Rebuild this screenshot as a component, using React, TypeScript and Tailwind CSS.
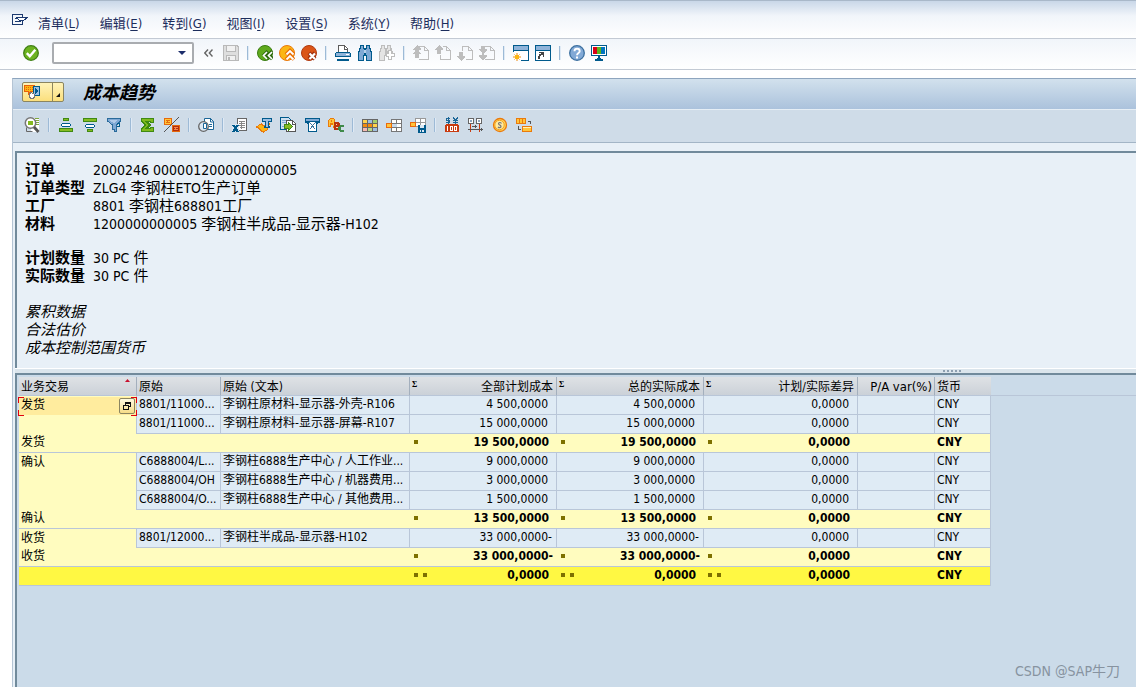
import { ReactNode } from "react";
import clsx from "clsx";

type IconProps = { children: ReactNode; smooth?: boolean };

function Icon({ children, smooth }: IconProps) {
  return (
    <svg
      className="block h-4 w-4 shrink-0"
      viewBox="0 0 16 16"
      fill="none"
      shapeRendering={smooth ? "auto" : "crispEdges"}
      aria-hidden="true"
    >
      {children}
    </svg>
  );
}

const pageShape = (
  <>
    <path d="M6 1.5h5.500l4 4v9H6" stroke="#bdbdbd" />
    <path d="M11.500 1v4H15" stroke="#bdbdbd" />
  </>
);

const systemTools = [
  {
    label: "保存",
    icon: (
      <Icon>
        <path d="M0 0h14l2 2v14H0z" fill="#b9b9b9" />
        <path d="M1 1h2v6h10V1h1l1 2v12h-2v-5H3v5H1z" fill="#dedede" />
        <path d="M4 1h8v5H4zM4 11h8v4H4z" fill="#f1f1f1" />
        <path d="M5 12h2v3H5z" fill="#b9b9b9" />
      </Icon>
    ),
  },
  null,
  {
    label: "返回",
    icon: (
      <Icon smooth>
        <circle cx="8" cy="8" r="7.5" fill="#5fa91c" stroke="#3a7d12" />
        <path d="M11 6.5 7.5 10l3.500 4M15.500 6.500 12 10l3.500 4" stroke="#2f6b0e" strokeWidth="4" />
        <path d="M10 7 6.500 10.500 10 14M15 7l-3.500 3.500L15 14" stroke="#fff" strokeWidth="1.700" />
      </Icon>
    ),
  },
  {
    label: "退出",
    icon: (
      <Icon smooth>
        <circle cx="8" cy="8" r="7.500" fill="#fbb614" stroke="#ea7a0c" />
        <path d="m7 9.500 4-4 4 4M7 14.500l4-4 4 4" stroke="#e8700a" strokeWidth="3.600" />
        <path d="m7.500 9.500 3.500-3.500 3.500 3.500M7.500 14.500 11 11l3.500 3.500" stroke="#fff" strokeWidth="1.800" />
      </Icon>
    ),
  },
  {
    label: "取消",
    icon: (
      <Icon smooth>
        <circle cx="8" cy="8" r="7.500" fill="#db5517" stroke="#b03a10" />
        <path d="m8 8 6 6m0-6-6 6" stroke="#9d2f0e" strokeWidth="4" />
        <path d="m8.500 8.500 5.500 5.500m0-5.500L8.500 14" stroke="#fff" strokeWidth="2.200" />
      </Icon>
    ),
  },
  null,
  {
    label: "打印",
    icon: (
      <Icon>
        <path d="M4 0h6l3 3v5H3z" fill="#fff" />
        <path d="M3.500 7V.5h6l3 3V7M9.500 1v3H12" stroke="#5c5c5c" />
        <path d="M1 7h14v1h1v4H0V8h1z" fill="#005a8c" />
        <path d="M1 8h14v3H1z" fill="#8fb3d9" />
        <path d="M11 9h3v1h-3z" fill="#fff" />
        <path d="M2 14h12v2H2z" fill="#005a8c" />
      </Icon>
    ),
  },
  {
    label: "查找",
    icon: (
      <Icon>
        <path d="M3 0h4v3h2V0h4v3h1v3h1v10H9v-5H7v5H1V6h1V3h1z" fill="#005a8c" />
        <path d="M4 1h2v3h1v6H6v5H2V7h1V4h1zM10 1h2v3h1v3h1v8h-4v-5H9V4h1z" fill="#7fa8d4" />
        <path d="M7 5h2v3H7z" fill="#b8d0ea" />
      </Icon>
    ),
  },
  {
    label: "继续查找",
    icon: (
      <Icon>
        <path d="M2 0h4v3h2V0h4v3h1v3h1v4H8v1H6v5H0V6h1V3h1z" fill="#bdbdbd" />
        <path d="M3 1h2v3h1v6H5v5H1V7h1V4h1zM9 1h2v5H8V4h1z" fill="#e4e4e4" />
        <path d="M9 5h4v3h3v4h-3v3H9v-3H7V8h2z" fill="#bdbdbd" />
        <path d="M10 6h2v3h3v2h-3v3h-2v-3H8V9h2z" fill="#fff" />
      </Icon>
    ),
  },
  null,
  {
    label: "首页",
    icon: (
      <Icon>
        {pageShape}
        <path d="M4 0 0 4v1h2v2l-2 1v1h2v4h4V9h2V8L6 7V5h2V4z" fill="#bdbdbd" />
      </Icon>
    ),
  },
  {
    label: "上一页",
    icon: (
      <Icon>
        <path d="M5.500 10v4.500h10v-9l-4-4H8" stroke="#bdbdbd" />
        <path d="M11.500 1v4H15" stroke="#bdbdbd" />
        <path d="M4 0 0 4v1h2v4h4V5h2V4z" fill="#bdbdbd" />
      </Icon>
    ),
  },
  {
    label: "下一页",
    icon: (
      <Icon>
        <path d="M5.500 6V1.500h6l4 4v9H9" stroke="#bdbdbd" />
        <path d="M11.500 1v4H15" stroke="#bdbdbd" />
        <path d="M2 7h4v4h2v1l-4 4-4-4v-1h2z" fill="#bdbdbd" />
      </Icon>
    ),
  },
  {
    label: "末页",
    icon: (
      <Icon>
        {pageShape}
        <path d="M2 1h4v3h2v1L5 8v2h3v1l-4 5-4-5v-1h3V8L0 5V4h2z" fill="#bdbdbd" />
      </Icon>
    ),
  },
  null,
  {
    label: "新会话",
    icon: (
      <Icon>
        <path d="M1 1h14v14H1z" fill="#fff" />
        <path d="M1 1h14v4H1z" fill="#8fb3d9" />
        <path d="M.5 7V.5h15v15H8M1 5.500h14" stroke="#005a8c" />
        <path d="M4 8v8M0 12h8M1.500 9.500l5 5m0-5-5 5" stroke="#ef8a0c" shapeRendering="auto" />
        <path d="M2 10h4v4H2z" fill="#fbb614" />
      </Icon>
    ),
  },
  {
    label: "快捷方式",
    icon: (
      <Icon>
        <path d="M.5.5h15v15H.5z" fill="#fff" stroke="#005a8c" />
        <path d="M1 1h14v4H1z" fill="#8fb3d9" />
        <path d="M1 5.500h14" stroke="#005a8c" />
        <path d="M4 7h5v5H8v-2H6v1H5v3H3v-3h1V9h2V8H4z" fill="#444" />
      </Icon>
    ),
  },
  null,
  {
    label: "帮助",
    icon: (
      <Icon smooth>
        <circle cx="8" cy="8" r="7.300" fill="#82a9d6" stroke="#3b6f9f" strokeWidth="1.300" />
        <path d="M5.500 6.200c0-3.200 5.200-3.200 5.200 0C10.700 8 8 8 8 10.200" stroke="#fff" strokeWidth="1.900" />
        <path d="M7 11.500h2v2H7z" fill="#fff" />
      </Icon>
    ),
  },
  {
    label: "定制布局",
    icon: (
      <Icon>
        <path d="M.5.5h15v10H.5z" fill="#fff" stroke="#005a8c" />
        <path d="M2 2h4v7H2z" fill="#d90016" />
        <path d="M6 2h4v7H6z" fill="#5fb41c" />
        <path d="M10 2h4v7h-4z" fill="#0075c0" />
        <path d="M7 11h2v3H7zM6 13h4v1h2v2H4v-2h2z" fill="#005a8c" />
      </Icon>
    ),
  },
];

const reportTools = [
  {
    label: "明细",
    icon: (
      <Icon smooth>
        <path d="M7 1h8v14H7z" fill="#fff" />
        <path d="M11 1.500h4M11 3.500h4M11 5.500h4M11 7.500h4" stroke="#7da83a" />
        <path d="M2.500 10.500v4h6" stroke="#666" />
        <circle cx="6.500" cy="6" r="5.200" fill="#fff" stroke="#777" strokeWidth="1.500" />
        <path d="M4 4h5v4H4z" fill="#83b81f" />
        <path d="m10 10 4.500 5" stroke="#555" strokeWidth="2.800" />
      </Icon>
    ),
  },
  null,
  {
    label: "升序",
    icon: (
      <Icon>
        <path d="M5 1h6v3H5zM1 11h14v4H1z" fill="#3f8a12" />
        <path d="M6 2h4v1H6zM2 12h12v2H2z" fill="#86bb22" />
        <path d="M4 7h8v2H4z" fill="#fff" />
        <path d="M4 6h8v1H4zM4 9h8v1H4zM3 7h1v2H3zM12 7h1v2h-1z" fill="#005a8c" />
      </Icon>
    ),
  },
  {
    label: "降序",
    icon: (
      <Icon>
        <path d="M1 1h14v4H1zM5 12h6v3H5z" fill="#3f8a12" />
        <path d="M2 2h12v2H2zM6 13h4v1H6z" fill="#86bb22" />
        <path d="M4 8h8v2H4z" fill="#fff" />
        <path d="M4 7h8v1H4zM4 10h8v1H4zM3 8h1v2H3zM12 8h1v2h-1z" fill="#005a8c" />
      </Icon>
    ),
  },
  {
    label: "过滤",
    icon: (
      <Icon>
        <path d="M1.500 1.500h13V4L10.500 8v6.500h-2v-2h-2V8l-5-4z" fill="#7fa8d4" stroke="#2a6b9b" />
        <path d="M3 3h9l-4 3z" fill="#b0cae8" />
        <path d="M11 6.500h2v3h-2" stroke="#005a8c" />
      </Icon>
    ),
  },
  null,
  {
    label: "总计",
    icon: (
      <Icon>
        <path d="M1 1h13v5h-4V5H8l3 3-3 3h2v-1h4v5H1v-4l3-3-3-3z" fill="#3f8a12" />
        <path d="M2 2h11v3h-2V4H5v1l4 3-4 3v1h6v-1h2v3H2v-2l4-4-4-4z" fill="#7fba1c" />
      </Icon>
    ),
  },
  {
    label: "小计",
    icon: (
      <Icon>
        <path d="M0 1h8v7H0zM8 8h8v7H8z" fill="#e5690c" />
        <path d="M1 2h6v5H1z" fill="#ffc53a" />
        <path d="M2 3h4v1H4v1h2v1H2V5h1V4H2z" fill="#e5690c" />
        <path d="M9 9h6v5H9z" fill="#b32d0c" />
        <path d="M10 10h4v1h-2v1h2v1h-4v-1h1v-1h-1z" fill="#f3884c" />
        <path d="M0 15 15 0" stroke="#555" shapeRendering="auto" />
      </Icon>
    ),
  },
  null,
  {
    label: "打印预览",
    icon: (
      <Icon smooth>
        <path d="M6.500 1.500h6l3 3v8h-9z" fill="#fff" stroke="#1c6798" />
        <path d="M12.500 1v4H16M11 7.500h3M11 9.500h3" stroke="#1c6798" />
        <circle cx="5.500" cy="9.500" r="4.800" fill="#dce8f3" stroke="#666" strokeWidth="1.300" />
        <path d="M5.500 6.500h3v5h-3z" fill="#fff" stroke="#1c6798" />
      </Icon>
    ),
  },
  null,
  {
    label: "电子表格",
    icon: (
      <Icon>
        <path d="M5.500 1.500h9v12h-9z" fill="#fff" stroke="#666" />
        <path d="M7 4.500h6M7 6.500h6M7 8.500h6M8 10.500h5" stroke="#888" />
        <path d="M9.500 4v8" stroke="#888" />
        <path d="M0 7h7v8H0z" fill="#dbe6f1" />
        <path d="M0 8h3v1h1V8h3v1H6v1H5v2h1v2h1v1H4v-1H3v1H0v-1h1v-2h1v-2H1V9H0z" fill="#005a8c" />
      </Icon>
    ),
  },
  {
    label: "字处理",
    icon: (
      <Icon>
        <path d="m.5 10 5-3.500 1 2 4 1 3-2.500-2 5.500-4 2.500-3-1.500-1-2z" fill="#fbb614" stroke="#ea7a0c" />
        <path d="M6 1h10v4h-3v4h1v2H8V9h1V5H6z" fill="#005a8c" />
        <path d="M7 2h8v2h-3v6h-2V4H7z" fill="#9dc0e4" />
      </Icon>
    ),
  },
  {
    label: "本地文件",
    icon: (
      <Icon>
        <path d="M.5.5h8l2 2v10H.5z" fill="#cfe0f0" stroke="#005a8c" />
        <path d="M2 3.500h4M2 5.500h4M2 9.500h3" stroke="#7fa8d4" />
        <path d="M6.500 3.500h6l3 3v8h-9z" fill="#fff" stroke="#555" />
        <path d="M12.500 3v4H16" stroke="#555" />
        <path d="M4 7h4V5h1l4 4.500L9 14H8v-2H4z" fill="#3f8a12" />
        <path d="M5 8h4V7l3 2.500L9 12v-1H5z" fill="#86bb22" />
      </Icon>
    ),
  },
  {
    label: "邮件收件人",
    icon: (
      <Icon>
        <path d="M1 1h15v5h-2v1H3V6H1z" fill="#005a8c" />
        <path d="M2 2h13v2H2z" fill="#7fa8d4" />
        <path d="M4.500 4.500h8v10h-8z" fill="#fff" stroke="#005a8c" />
        <path d="m5.500 5.500 3 3 3-3M6 12l2.500-3M11 12 8.500 9" stroke="#39759f" />
      </Icon>
    ),
  },
  {
    label: "ABC 分析",
    icon: (
      <Icon>
        <path d="M0 10V3l2-2h3l2 2v8H5V8H3v2z" fill="#ea7a0c" />
        <path d="M1 9V3l1-1h3l1 1v6H5V6H2v3z" fill="#ffc53a" />
        <path d="M3 3h1v2H3z" fill="#ea7a0c" />
        <path d="M6 5h4l2 2v5l-1 1H6z" fill="#b8320e" />
        <path d="M8 7h1v1H8zM8 10h2v1H8z" fill="#ffd4bd" />
        <path d="M16 8h-4l-2 2v3l2 2h4v-2h-3v-3h3z" fill="#3f8a4a" />
      </Icon>
    ),
  },
  null,
  {
    label: "当前显示",
    icon: (
      <Icon>
        <path d="M0 2h16v13H0z" fill="#666" />
        <path d="M1 3h4v3H1z" fill="#ffd34d" />
        <path d="M6 3h4v3H6z" fill="#a0bfe0" />
        <path d="M11 3h4v3h-4z" fill="#a5cf6b" />
        <path d="M1 7h4v3H1zM6 7h4v3H6z" fill="#f08a10" />
        <path d="M11 7h4v3h-4z" fill="#ffd34d" />
        <path d="M1 11h4v3H1z" fill="#f6b9b0" />
        <path d="M6 11h4v3H6z" fill="#b6d78a" />
        <path d="M11 11h4v3h-4z" fill="#a0bfe0" />
      </Icon>
    ),
  },
  {
    label: "选择布局",
    icon: (
      <Icon>
        <path d="M5 2h11v13H5z" fill="#fff" />
        <path d="M5 2.500h11M5 6.500h11M5 10.500h11M5 14.500h11M5.500 2v4M5.500 11v4M10.500 2v13M15.500 2v13" stroke="#777" />
        <path d="M6 7h5v3H6z" fill="#c6d9ec" />
        <path d="M.5 6.500h5v4h-5z" fill="#ffc53a" stroke="#ea6a0c" />
      </Icon>
    ),
  },
  {
    label: "保存布局",
    icon: (
      <Icon>
        <path d="M5 1h11v8H5z" fill="#fff" />
        <path d="M5 1.500h11M5 5.500h11M5.500 1v4M10.500 1v8M15.500 1v8M5 9.500h4" stroke="#999" />
        <path d="M.5 5.500h5v4h-5z" fill="#ffc53a" stroke="#ea6a0c" />
        <path d="M8 8h8v8H8z" fill="#005a8c" />
        <path d="M10 8h4v3h-4zM10 13h4v2h-4z" fill="#dce8f3" />
        <path d="M11 13h1v2h-1z" fill="#005a8c" />
      </Icon>
    ),
  },
  null,
  {
    label: "货币",
    icon: (
      <Icon>
        <path d="M6 1.500H2.500v2h3v2H2M4.500 0v7" stroke="#1c6798" />
        <path d="m9 .5 2.500 2.500L14 .5M11.500 3v4M9 3.500h5M9 5.500h5" stroke="#1c6798" />
        <path d="M2 7h12v1h1v7H1V8h1z" fill="#c93c10" />
        <path d="M3 9h1v5H3zM6 9h3v5H6zM10 9h3v5h-3z" fill="#fff" />
        <path d="M7 10h1v3H7zM11 10h1v3h-1z" fill="#c93c10" />
      </Icon>
    ),
  },
  {
    label: "期间比较",
    icon: (
      <Icon>
        <path d="M.5 1.500h5v5h-5zM8.500 1.500h5v5h-5z" fill="#fff" stroke="#666" />
        <path d="M2 3h2v2H2zM10 3h2v2h-2z" fill="#8fa5bd" />
        <path d="M2.500 7v8M11.500 7v8" stroke="#c93c10" />
        <path d="M4 9.500h5M7.500 8v3M0 12.500h15M13.500 11v3" stroke="#555" />
      </Icon>
    ),
  },
  {
    label: "成本",
    icon: (
      <Icon smooth>
        <circle cx="8" cy="8" r="6.500" fill="#ffd65a" stroke="#ea7a0c" strokeWidth="1.300" />
        <circle cx="7.500" cy="8" r="4.700" fill="#ffeaa0" stroke="#f3a21c" />
        <path d="M9.500 6.500C8 4.500 5.500 6 7 7.500l1.500 1C10 10 7.500 11.500 6 10" stroke="#777" strokeWidth="1.200" />
      </Icon>
    ),
  },
  {
    label: "汇总",
    icon: (
      <Icon>
        <path d="M.5 1.500h9v5h-9z" fill="#ffc53a" stroke="#ea7a0c" />
        <path d="M3.500 2v5M6.500 2v5" stroke="#ea7a0c" />
        <path d="M6.500 9.500h9v5h-9z" fill="#ffc53a" stroke="#ea7a0c" />
        <path d="M7 10h8v1H7z" fill="#fff2b8" />
        <path d="M12 4.500h2.500V7M2.500 9v3.500H5" stroke="#555" />
      </Icon>
    ),
  },
];

const menus = [
  { title: "清单", key: "L" },
  { title: "编辑", key: "E" },
  { title: "转到", key: "G" },
  { title: "视图", key: "I" },
  { title: "设置", key: "S" },
  { title: "系统", key: "Y" },
  { title: "帮助", key: "H" },
];

const orderInfo = [
  { label: "订单", value: "2000246 000001200000000005" },
  { label: "订单类型", value: "ZLG4 李钢柱ETO生产订单" },
  { label: "工厂", value: "8801 李钢柱688801工厂" },
  { label: "材料", value: "1200000000005 李钢柱半成品-显示器-H102" },
];

const quantities = [
  { label: "计划数量", value: "30 PC 件" },
  { label: "实际数量", value: "30 PC 件" },
];

type Row = {
  kind: "item" | "subtotal" | "total";
  group?: string;
  origin?: string;
  text?: string;
  plan: string;
  actual: string;
  variance: string;
};

const rows: Row[] = [
  { kind: "item", group: "发货", origin: "8801/11000...", text: "李钢柱原材料-显示器-外壳-R106", plan: "4 500,0000", actual: "4 500,0000", variance: "0,0000" },
  { kind: "item", origin: "8801/11000...", text: "李钢柱原材料-显示器-屏幕-R107", plan: "15 000,0000", actual: "15 000,0000", variance: "0,0000" },
  { kind: "subtotal", group: "发货", plan: "19 500,0000", actual: "19 500,0000", variance: "0,0000" },
  { kind: "item", group: "确认", origin: "C6888004/L...", text: "李钢柱6888生产中心 / 人工作业...", plan: "9 000,0000", actual: "9 000,0000", variance: "0,0000" },
  { kind: "item", origin: "C6888004/OH", text: "李钢柱6888生产中心 / 机器费用...", plan: "3 000,0000", actual: "3 000,0000", variance: "0,0000" },
  { kind: "item", origin: "C6888004/O...", text: "李钢柱6888生产中心 / 其他费用...", plan: "1 500,0000", actual: "1 500,0000", variance: "0,0000" },
  { kind: "subtotal", group: "确认", plan: "13 500,0000", actual: "13 500,0000", variance: "0,0000" },
  { kind: "item", group: "收货", origin: "8801/12000...", text: "李钢柱半成品-显示器-H102", plan: "33 000,0000-", actual: "33 000,0000-", variance: "0,0000" },
  { kind: "subtotal", group: "收货", plan: "33 000,0000-", actual: "33 000,0000-", variance: "0,0000" },
  { kind: "total", plan: "0,0000", actual: "0,0000", variance: "0,0000" },
];

function Toolbar({ tools, className }: { tools: typeof systemTools; className: string }) {
  return (
    <div className={clsx("flex items-center", className)}>
      {tools.map((tool, i) =>
        tool ? (
          <button key={tool.label} type="button" aria-label={tool.label}>
            {tool.icon}
          </button>
        ) : (
          <span key={i} className="h-3.5 w-0.5 border-l border-r border-l-[#9dbad6] border-r-[#dfeaf5]" />
        )
      )}
    </div>
  );
}

function MenuBar() {
  return (
    <nav className="flex h-[39px] items-center border-t border-b border-t-[#a9b8c9] border-b-[#c3cad4] bg-linear-to-b from-[#c9d7e8] via-[#f1f5fa] via-40% to-white pt-2 pl-3 text-[#1c2d5c]">
      <svg className="mr-2.5 mb-2 block h-4 w-4" viewBox="0 0 16 16" fill="none" shapeRendering="crispEdges" aria-hidden="true">
        <path d="M10 5V2.500H.5v10h10V10" stroke="#1c3a70" />
        <path d="M3 6.500h3M3 9.500h6" stroke="#1c3a70" />
        <path d="M5 5.500h10L10 10V8H7z" fill="#fff" stroke="#1c3a70" />
      </svg>
      <div className="flex gap-5 text-[13px]">
        {menus.map((menu) => (
          <button key={menu.key} type="button">
            {menu.title}(<u className="underline-offset-2">{menu.key}</u>)
          </button>
        ))}
      </div>
    </nav>
  );
}

function CommandBar() {
  return (
    <div className="flex h-[31px] items-center border-b border-[#c3cad4] bg-linear-to-b from-[#f1f5fa] to-white pb-0.5 pl-[23px]">
      <button type="button" aria-label="回车">
        <Icon smooth>
          <circle cx="8" cy="8" r="7.300" fill="#6cb31f" stroke="#3f7f14" strokeWidth="1.300" />
          <path d="m3.800 8.200 3 3 5.500-6.500" stroke="#fff" strokeWidth="2.400" />
        </Icon>
      </button>
      <div className="ml-[13px] flex h-[22px] w-[142px] items-center rounded-xs border-2 border-[#a9acb0] bg-white pr-1.5">
        <input aria-label="命令" className="w-full min-w-0 px-1 text-xs outline-none" />
        <button type="button" aria-label="命令历史">
          <svg className="block h-1 w-2" viewBox="0 0 8 4" aria-hidden="true">
            <path d="M0 0h8L4 4z" fill="#1c2d6b" />
          </svg>
        </button>
      </div>
      <button type="button" aria-label="收起" className="mr-2.5 ml-2.5">
        <svg className="block h-2 w-[9px]" viewBox="0 0 9 8" fill="none" stroke="#666" strokeWidth="1.400" aria-hidden="true">
          <path d="M4 .5.800 4 4 7.500M8.500.5 5.300 4l3.200 3.500" />
        </svg>
      </button>
      <Toolbar tools={systemTools} className="gap-1.5 [&>span]:mx-0.5" />
    </div>
  );
}

function TitleBar() {
  return (
    <div className="flex h-[31px] items-center border-b border-[#e6eef5] bg-linear-to-b from-[#d2e1ed] to-[#abc2dc] pl-[9px]">
      <div className="mb-1 flex h-5 w-[42px] rounded-xs border border-[#8b8560] bg-linear-to-b from-[#fff3b8] to-[#fbdf7c]">
        <button type="button" aria-label="服务" className="flex-1 pl-px">
          <Icon>
            <path d="M.5 1.500h10v6H7l-3 3v-3H.5z" fill="#fbb614" stroke="#e8600a" />
            <path d="M2 3.500h7M2 5.500h7" stroke="#e8600a" strokeDasharray="1 1" />
            <path d="M9.500 2.500h6v9h-6z" fill="#9dc0e4" stroke="#005a8c" />
            <path d="M11 4v6l3-3z" fill="#005a8c" />
            <path d="m5.500 9.500 2-1 3 2v3l-2 1h-2l-1-2z" fill="#fff" stroke="#777" />
          </Icon>
        </button>
        <button type="button" aria-label="更多服务" className="flex w-[11px] items-end justify-center border-l border-[#8b8560] pb-1">
          <svg className="block h-1 w-1" viewBox="0 0 4 4" aria-hidden="true">
            <path d="M4 0v4H0z" fill="#111" />
          </svg>
        </button>
      </div>
      <h1 className="mb-0.5 ml-[19px] text-lg leading-5 font-bold text-black italic">成本趋势</h1>
    </div>
  );
}

// Chinese runs are set one step larger than the digits and Latin letters around them
function MixedText({ text }: { text: string }) {
  return text.split(/([\u4e00-\u9fff]+)/).map((part, i) =>
    i % 2 ? (
      <span key={i} className="text-[15px]">
        {part}
      </span>
    ) : (
      part
    )
  );
}

function InfoList({ items }: { items: { label: string; value: string }[] }) {
  return (
    <dl className="grid auto-rows-[18px] grid-cols-[68px_1fr] leading-[18px]">
      {items.map((item) => (
        <div key={item.label} className="contents">
          <dt className="text-[15px] font-bold">{item.label}</dt>
          <dd className="text-[14px]">
            <MixedText text={item.value} />
          </dd>
        </div>
      ))}
    </dl>
  );
}

function Marks({ kind }: { kind: Row["kind"] }) {
  if (kind === "item") return null;
  return (
    <span className="flex gap-[5px]">
      <i className="h-1 w-1 bg-[#7d7000]" />
      {kind === "total" && <i className="h-1 w-1 bg-[#7d7000]" />}
    </span>
  );
}

function AmountCell({ kind, value }: { kind: Row["kind"]; value: string }) {
  return (
    <td className={clsx("border-b border-[#b9c6d8] pb-0.5 pl-1", kind === "item" && "border-r", value.endsWith("-") ? "pr-1" : "pr-2")}>
      <div className="flex items-center justify-between">
        <Marks kind={kind} />
        <span className="ml-auto">{value}</span>
      </div>
    </td>
  );
}

function SelectedCell({ text }: { text: string }) {
  return (
    <div className="relative flex h-[18px] items-center justify-between bg-[#ffec9e] pl-0.5">
      <span className="pb-0.5">{text}</span>
      <button type="button" aria-label="搜索帮助" className="mr-px flex h-4 w-4 items-center justify-center rounded-xs border border-[#8b8560] bg-linear-to-b from-[#fffbe0] to-[#f6dc86]">
        <svg className="block h-2 w-2" viewBox="0 0 8 8" fill="none" stroke="#111" shapeRendering="crispEdges" aria-hidden="true">
          <path d="M2.500 3V.5h5v4H6M2 1.500h6M.5 3.500h5v4h-5z" />
        </svg>
      </button>
      <i className="absolute top-0 -left-px h-1.5 w-1.5 border-t border-l border-[#e0000f]" />
      <i className="absolute top-0 -right-px h-1.5 w-1.5 border-t border-r border-[#e0000f]" />
      <i className="absolute -bottom-px -left-px h-1.5 w-1.5 border-b border-l border-[#e0000f]" />
      <i className="absolute -right-px -bottom-px h-1.5 w-1.5 border-r border-b border-[#e0000f]" />
    </div>
  );
}

function CostTable() {
  const th =
    "h-[19px] border-b border-r border-b-[#b9c6d8] border-r-[#a3afbd] bg-linear-to-b from-[#dfe2e5] to-[#cbd1d8] px-0.5 pt-0.5 font-normal";

  return (
    <table className="w-full table-fixed border-separate border-spacing-0 text-xs leading-4 whitespace-nowrap text-black">
      <colgroup>
        <col className="w-[118px]" />
        <col className="w-[84px]" />
        <col className="w-[189px]" />
        <col className="w-[147px]" />
        <col className="w-[147px]" />
        <col className="w-[154px]" />
        <col className="w-[77px]" />
        <col className="w-[56px]" />
        <col />
      </colgroup>
      <thead>
        <tr>
          <th className={clsx(th, "text-left")}>
            <div className="flex justify-between">
              业务交易
              <svg className="mr-1 block h-[3px] w-[5px]" viewBox="0 0 5 3" aria-hidden="true">
                <path d="M2.500 0 5 3H0z" fill="#c8102e" />
              </svg>
            </div>
          </th>
          <th className={clsx(th, "text-left")}>原始</th>
          <th className={clsx(th, "text-left")}>原始 (文本)</th>
          {["全部计划成本", "总的实际成本", "计划/实际差异"].map((title) => (
            <th key={title} className={th}>
              <div className="flex justify-between pr-px">
                <span className="font-serif text-[8px] leading-3 font-bold">Σ</span>
                <span>{title}</span>
              </div>
            </th>
          ))}
          <th className={clsx(th, "text-right text-[13px]")}>P/A var(%)</th>
          <th className={clsx(th, "border-r-0 text-left")}>货币</th>
          <td className="border-b border-[#b9c6d8]" />
        </tr>
      </thead>
      <tbody>
        {rows.map((row, i) => {
          const item = row.kind === "item";
          return (
            <tr
              key={i}
              className={clsx(
                "h-[19px]",
                item && "bg-[#dfebf5]",
                row.kind === "subtotal" && "bg-[#fffcbf] font-bold",
                row.kind === "total" && "bg-[#fff843] font-bold"
              )}
            >
              {item ? (
                <>
                  {i === 0 ? (
                    <td className="border-r border-[#b9c6d8] bg-[#fffcbf] p-0">
                      <SelectedCell text="发货" />
                    </td>
                  ) : (
                    <td className="border-r border-[#b9c6d8] bg-[#fffcbf] pb-0.5 pl-0.5">{row.group}</td>
                  )}
                  <td className="border-r border-b border-[#b9c6d8] px-0.5 pb-0.5">{row.origin}</td>
                  <td className="overflow-hidden border-r border-b border-[#b9c6d8] px-0.5 pb-0.5">{row.text}</td>
                </>
              ) : (
                <td colSpan={3} className="border-b border-[#b9c6d8] pb-0.5 pl-0.5 font-normal">
                  {row.group}
                </td>
              )}
              <AmountCell kind={row.kind} value={row.plan} />
              <AmountCell kind={row.kind} value={row.actual} />
              <AmountCell kind={row.kind} value={row.variance} />
              <td className={clsx("border-b border-[#b9c6d8]", item && "border-r")} />
              <td className="border-r border-b border-[#b9c6d8] px-0.5 pb-0.5">CNY</td>
              <td className="bg-[#cbdbe9]" />
            </tr>
          );
        })}
      </tbody>
    </table>
  );
}

function App() {
  return (
    <div className="relative flex min-h-screen flex-col bg-white font-['DejaVu_Sans_Condensed','Noto_Sans','Noto_Sans_CJK_SC',sans-serif]">
      <MenuBar />
      <CommandBar />
      <main className="mt-2 ml-3 flex flex-1 flex-col border-t border-l border-t-[#8ea5be] border-l-[#b4c4d4] bg-[#e8f0f7]">
        <TitleBar />
        <Toolbar
          tools={reportTools}
          className="h-[33px] gap-2 border-b border-[#a3b5c6] bg-[#cfdce8] pb-0.5 pl-[11px]"
        />
        <section className="mt-2 ml-0.5 flex h-[217px] flex-col border-t-2 border-l-2 border-[#718a9b] pt-2 pl-2 text-black">
          <InfoList items={orderInfo} />
          <div className="h-4" />
          <InfoList items={quantities} />
          <div className="h-[18px]" />
          <div className="text-[15px] leading-[18px] italic">
            <p>累积数据</p>
            <p>合法估价</p>
            <p>成本控制范围货币</p>
          </div>
        </section>
        <div className="ml-0.5 flex h-[5px] items-center justify-end gap-px border-t border-white bg-[#dbe5ec] pr-[174px]">
          {[0, 1, 2, 3, 4].map((dot) => (
            <i key={dot} className="mr-px h-0.5 w-0.5 bg-[#8d9fb0]" />
          ))}
        </div>
        <section className="ml-0.5 flex-1 border-t-2 border-l-2 border-[#718a9b] bg-[#cbdbe9] pt-0.5 pl-0.5">
          <CostTable />
        </section>
      </main>
      <p className="absolute right-4 bottom-1.5 text-sm text-[#8793a0]">CSDN @SAP牛刀</p>
    </div>
  );
}

export default App;
